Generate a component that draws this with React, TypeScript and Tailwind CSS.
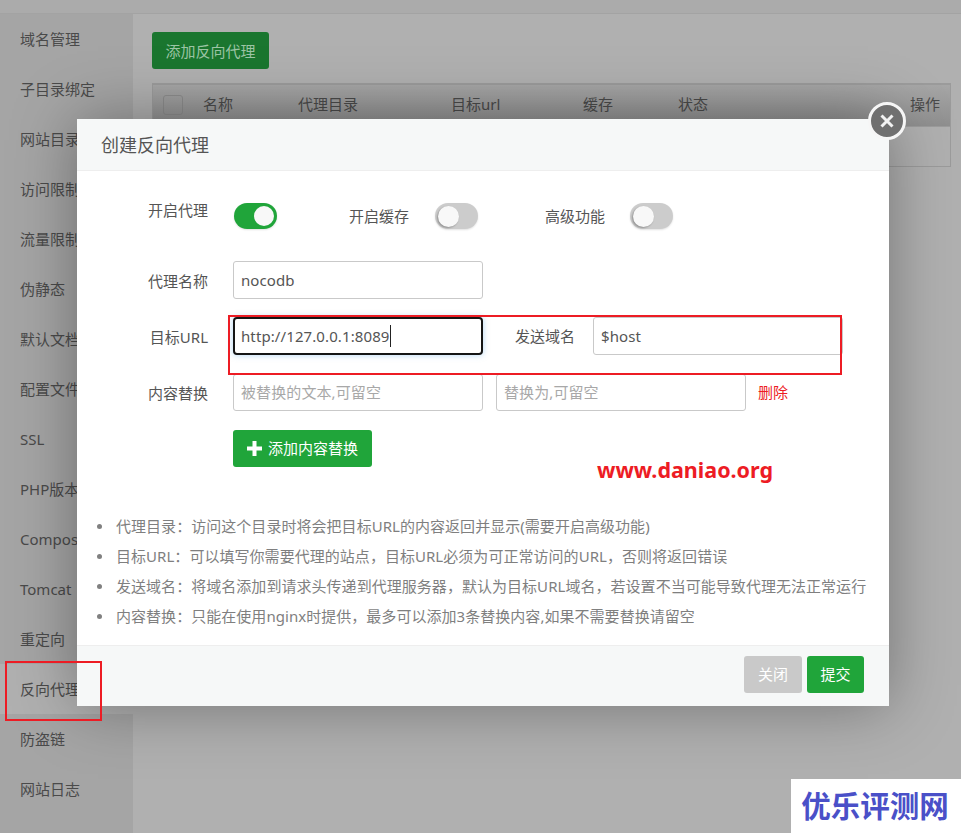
const sideItems = ["域名管理","子目录绑定","网站目录","访问限制","流量限制","伪静态","默认文档","配置文件","SSL","PHP版本","Composer","Tomcat","重定向","反向代理","防盗链","网站日志"];
const hints = [
  "代理目录：访问这个目录时将会把目标URL的内容返回并显示(需要开启高级功能)",
  "目标URL：可以填写你需要代理的站点，目标URL必须为可正常访问的URL，否则将返回错误",
  "发送域名：将域名添加到请求头传递到代理服务器，默认为目标URL域名，若设置不当可能导致代理无法正常运行",
  "内容替换：只能在使用nginx时提供，最多可以添加3条替换内容,如果不需要替换请留空",
];

function Toggle({ on }: { on?: boolean }) {
  return (
    <div className={on ? "w-[43px] h-[26px] rounded-full bg-[#20a53a] flex items-center justify-end pr-[1px] shadow-[0_1px_2px_rgba(0,0,0,0.12)]" : "w-[43px] h-[26px] rounded-full bg-[#cccccc] flex items-center pl-[1px] shadow-[0_1px_2px_rgba(0,0,0,0.12)]"}>
      <div className={on ? "w-[20px] h-[20px] mr-[2px] rounded-full bg-[#f8f8f8]" : "w-[21px] h-[21px] ml-[2px] rounded-full bg-[#f8f8f8] shadow-[-1px_1px_2px_rgba(0,0,0,0.3)]"} />
    </div>
  );
}

function Field({ children, placeholder, className = "h-[38px]" }: { children?: React.ReactNode; placeholder?: boolean; className?: string }) {
  return (
    <div className={`w-[250px] ${className} border border-[#c9c9c9] rounded-[3px] bg-white px-[7px] flex items-center text-[15px] tracking-[0.1px] ${placeholder ? "text-[#a8a8a8]" : "text-[#555555]"}`}>
      {children}
    </div>
  );
}

function RowLabel({ children }: { children: React.ReactNode }) {
  return <div className="w-[131px] mr-[25px] text-right text-[15px] text-[#555555] pt-[2px]">{children}</div>;
}

export default function App() {
  return (
    <div className="relative w-[961px] h-[833px] overflow-hidden bg-[#b0b0b0] font-['Noto_Sans','Noto_Sans_CJK_SC',sans-serif]">
      <div className="h-[14px] bg-[#ababab] border-b border-[#a3a3a3]" />
      <div className="flex h-[819px]">
        <aside className="w-[133px] bg-[#a5a5a5] shrink-0">
          {sideItems.map((s) => (
            <div key={s} className={`h-[50px] flex items-center pl-[20px] text-[15px] text-[#4a4a4a] ${s === "反向代理" ? "bg-[#b0b0b0]" : ""}`}>{s}</div>
          ))}
        </aside>
        <main className="flex-1 pl-[19px] pr-[10px] pt-[18px]">
          <div className="w-[117px] h-[37px] pt-[2px] rounded-[3px] bg-[#1a762f] text-[#9cc5a5] text-[15px] flex items-center justify-center">添加反向代理</div>
          <div className="mt-[14px] h-[84px] border border-[#9b9b9b] border-t-2">
            <div className="h-[42px] pb-[2px] border-b border-[#9c9c9c] bg-gradient-to-b from-[#a6a6a6] to-[#8f8f8f] flex items-center text-[15px] text-[#4a4a4a] relative">
              <div className="w-[20px] h-[20px] ml-[10px] mr-[20px] border border-[#8c8c8c] rounded-[3px] shrink-0" />
              <div className="w-[95px]">名称</div>
              <div className="w-[153px]">代理目录</div>
              <div className="w-[132px]">目标url</div>
              <div className="w-[95px]">缓存</div>
              <div className="flex-1">状态</div>
              <div className="pr-[10px]">操作</div>
            </div>
          </div>
        </main>
      </div>

      {/* modal */}
      <div className="absolute left-[77px] top-[119px] w-[812px] h-[587px] bg-white flex flex-col shadow-[0_0_60px_rgba(0,0,0,0.35)]">
        <div className="h-[52px] shrink-0 pt-[2px] bg-[#f6f8f8] border-b border-[#eeeeee] pl-[24px] flex items-center text-[18px] text-[#555555]">创建反向代理</div>
        <div className="flex-1 pt-[32px]">
          <div className="flex h-[26px]">
            <div className="w-[131px] mr-[26px] h-[26px] pb-[12px] flex items-center justify-end text-[15px] text-[#555555]">开启代理</div>
            <Toggle on />
            <div className="ml-[72px] mr-[26px] flex items-center text-[15px] text-[#555555]">开启缓存</div>
            <Toggle />
            <div className="ml-[67px] mr-[25px] flex items-center text-[15px] text-[#555555]">高级功能</div>
            <Toggle />
          </div>
          <div className="flex mt-[32px] items-center">
            <RowLabel>代理名称</RowLabel>
            <Field>nocodb</Field>
          </div>
          <div className="flex mt-[18px] items-center">
            <RowLabel>目标URL</RowLabel>
            <Field className="h-[38px] !border-2 !border-[#151515] !rounded-[4px] !px-[6px] shadow-[0_0_6px_rgba(102,175,233,0.5)]">
              <span className="border-r border-[#222222]">http://127.0.0.1:8089</span>
            </Field>
            <div className="ml-[32px] mr-[18px] text-[15px] text-[#555555]">发送域名</div>
            <Field>$host</Field>
          </div>
          <div className="flex mt-[19px] items-center">
            <RowLabel>内容替换</RowLabel>
            <Field placeholder className="h-[37px]">被替换的文本,可留空</Field>
            <div className="w-[13px]" />
            <Field placeholder className="h-[37px]">替换为,可留空</Field>
            <div className="ml-[12px] text-[15px] text-[#ed1c24]">删除</div>
          </div>
          <div className="mt-[19px] ml-[156px] w-[139px] h-[37px] rounded-[3px] bg-[#20a53a] text-white text-[15px] flex items-center justify-center gap-[6px]">
            <svg width="15" height="15" viewBox="0 0 15 15" fill="white"><path d="M5.5 0h4v5.5H15v4H9.5V15h-4V9.5H0v-4h5.5z" /></svg>
            <span>添加内容替换</span>
          </div>
          <ul className="mt-[44px] pl-[20px] list-none">
            {hints.map((h) => (
              <li key={h} className="h-[30px] flex items-center text-[15px] tracking-[0.04px] text-[#7f7f7f] whitespace-nowrap">
                <span className="w-[5px] h-[5px] rounded-full bg-[#808080] mr-[14px] shrink-0" />
                {h}
              </li>
            ))}
          </ul>
        </div>
        <div className="h-[61px] shrink-0 bg-[#f6f8f8] border-t border-[#eeeeee] flex items-start pt-[10px] justify-end pr-[25px] gap-[5px] text-[15px] text-white">
          <div className="w-[58px] h-[37px] rounded-[3px] bg-[#c9c9c9] flex items-center justify-center">关闭</div>
          <div className="w-[57px] h-[37px] rounded-[3px] bg-[#20a53a] flex items-center justify-center">提交</div>
        </div>
      </div>

      {/* close */}
      <div className="absolute left-[868px] top-[102px] w-[38px] h-[38px] rounded-full bg-[#707070] border-[3px] border-[#f6f6f6] flex items-center justify-center">
        <svg width="16" height="16" viewBox="0 0 16 16" stroke="#f2f2f2" strokeWidth="3" fill="none"><path d="M2.5 2.5l11 11M13.5 2.5l-11 11" /></svg>
      </div>

      {/* annotations */}
      <div className="absolute left-[228px] top-[315px] w-[614px] h-[60px] border-2 border-[#ed1c24]" />
      <div className="absolute left-[5px] top-[661px] w-[97px] h-[60px] border-2 border-[#ed1c24]" />
      <div className="absolute left-[597px] top-[455px] text-[21.5px] leading-[30px] font-bold text-[#ed1c24]">www.daniao.org</div>
      <div className="absolute left-[791px] top-[779px] w-[170px] h-[54px] bg-white flex items-center justify-center pr-[2px] text-[29.5px] font-bold text-[#4a50c8]">优乐评测网</div>
    </div>
  );
}
